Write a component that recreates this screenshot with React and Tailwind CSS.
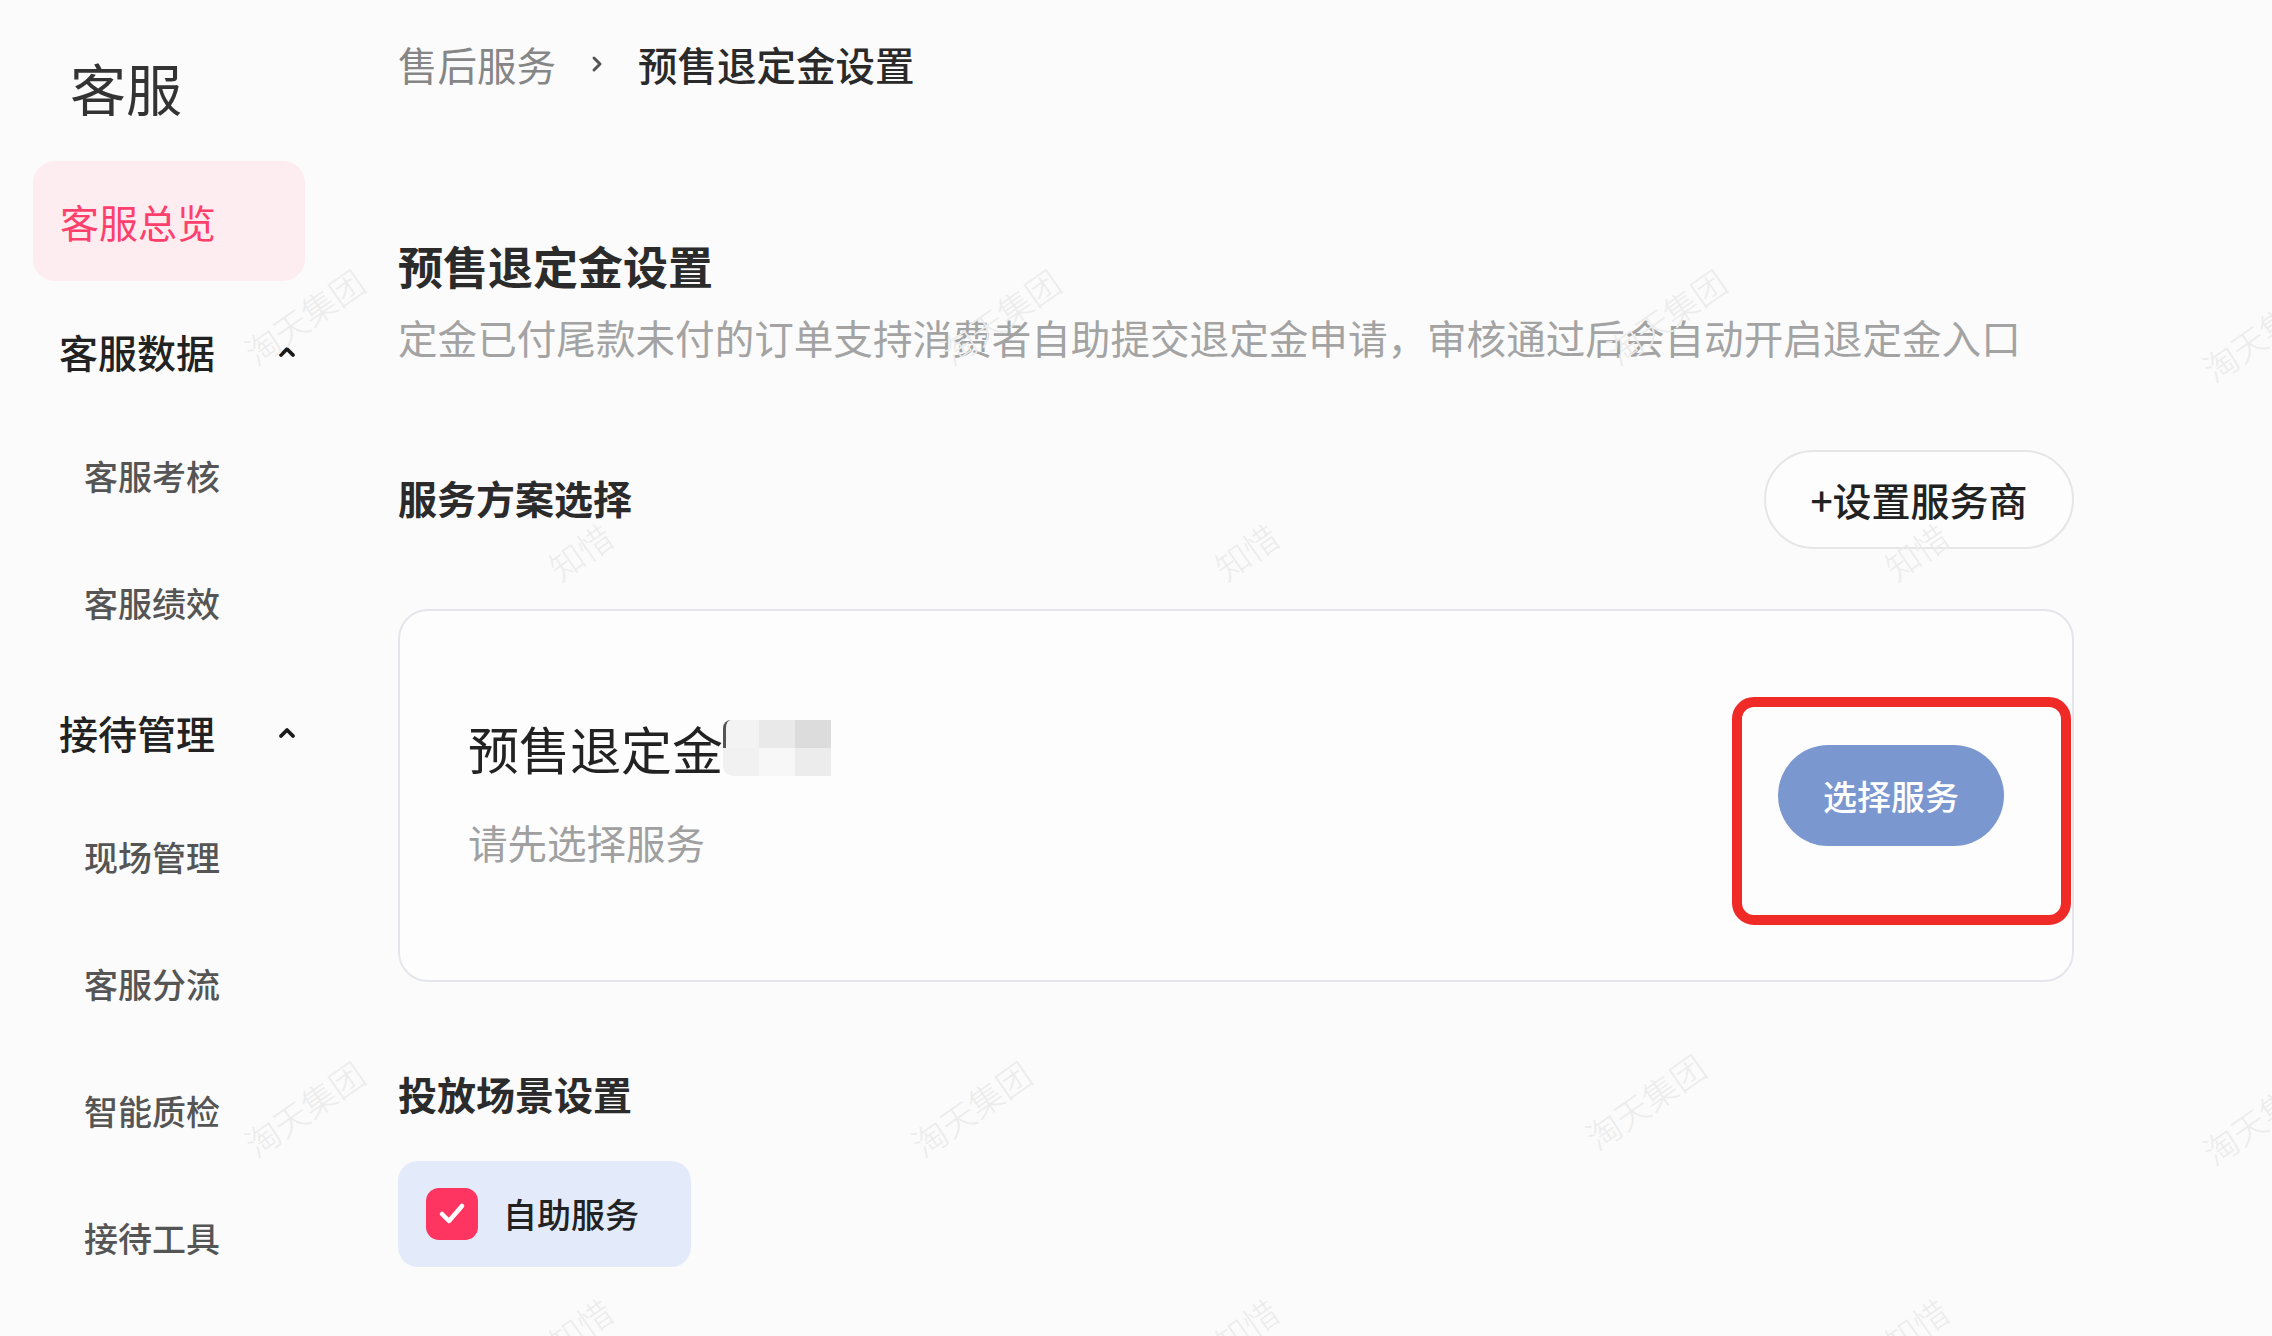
import React from 'react';

const font = { fontFamily: '"Noto Sans CJK SC", "Noto Sans", sans-serif' };

const marks = [
  { t: '淘天集团', x: 304, y: 316 },
  { t: '淘天集团', x: 1000, y: 316 },
  { t: '淘天集团', x: 1666, y: 316 },
  { t: '淘天集团', x: 2262, y: 333 },
  { t: '淘天集团', x: 304, y: 1108 },
  { t: '淘天集团', x: 971, y: 1108 },
  { t: '淘天集团', x: 1645, y: 1101 },
  { t: '淘天集团', x: 2262, y: 1116 },
  { t: '知惜', x: 580, y: 551 },
  { t: '知惜', x: 1246, y: 551 },
  { t: '知惜', x: 1916, y: 551 },
  { t: '知惜', x: 580, y: 1326 },
  { t: '知惜', x: 1246, y: 1326 },
  { t: '知惜', x: 1916, y: 1326 },
];

const ChevronUp = () => (
  <svg width="22" height="14" viewBox="0 0 22 14" fill="none">
    <path d="M5 11 L11 5 L17 11" stroke="#1a1a1a" strokeWidth="3.8" strokeLinecap="round" strokeLinejoin="round" />
  </svg>
);

const GroupHeader = ({ label }) => (
  <div className="flex h-[127px] items-center justify-between pl-[26px] pr-[100px]">
    <span className="text-[39px] font-medium leading-[52px] text-[#222]">{label}</span>
    <ChevronUp />
  </div>
);

const SubItem = ({ label }) => (
  <div className="flex h-[127px] items-center pb-[4px] pl-[51px]">
    <span className="text-[34px] font-medium leading-[48px] text-[#555]">{label}</span>
  </div>
);

export default function App() {
  return (
    <div className="relative min-h-screen w-full overflow-hidden bg-[#fbfbfb]" style={font}>
      <div className="flex">
        {/* sidebar */}
        <aside className="w-[398px] shrink-0 pl-[33px] pt-[55px]">
          <div className="pl-[37px] text-[56px] leading-[64px] text-[#333]">客服</div>
          <div className="mt-[42px] flex h-[120px] w-[272px] items-center rounded-[22px] bg-[#fdecf0] pl-[27px]">
            <span className="text-[39px] leading-[52px] text-[#ff3f6c]">客服总览</span>
          </div>
          <div className="mt-[6px]">
            <GroupHeader label="客服数据" />
            <SubItem label="客服考核" />
            <SubItem label="客服绩效" />
            <GroupHeader label="接待管理" />
            <SubItem label="现场管理" />
            <SubItem label="客服分流" />
            <SubItem label="智能质检" />
            <SubItem label="接待工具" />
          </div>
        </aside>

        {/* main */}
        <main className="flex-1 pr-[198px] pt-[38px]">
          <div className="flex items-center text-[39.5px] leading-[52px]">
            <span className="text-[#868686]">售后服务</span>
            <svg className="mx-[33px]" width="16" height="20" viewBox="0 0 16 20" fill="none">
              <path d="M5 4 L11 10 L5 16" stroke="#555" strokeWidth="3" strokeLinecap="round" strokeLinejoin="round" />
            </svg>
            <span className="font-medium text-[#2a2a2a]">预售退定金设置</span>
          </div>

          <h1 className="mt-[148px] text-[45px] font-bold leading-[56px] text-[#2b2b2b]">预售退定金设置</h1>
          <p className="mt-[17px] text-[39.6px] leading-[52px] text-[#a3a3a3]">
            定金已付尾款未付的订单支持消费者自助提交退定金申请，审核通过后会自动开启退定金入口
          </p>

          <div className="mt-[87px] flex items-center justify-between">
            <h2 className="-mt-[6px] text-[39px] font-bold leading-[52px] text-[#2b2b2b]">服务方案选择</h2>
            <button className="flex h-[99px] w-[310px] items-center justify-center rounded-full border-2 border-[#e6e6e8] bg-[#fdfdfd] text-[39px] font-medium text-[#222]">
              +设置服务商
            </button>
          </div>

          <div className="relative mt-[60px] flex h-[373px] items-center justify-between rounded-[30px] border-2 border-[#e4e6ec] bg-[#fdfdfd] px-[68px]">
            <div className="-mt-[6px]">
              <div className="flex items-center">
                <span className="text-[51px] leading-[60px] text-[#222]">预售退定金</span>
                <div className="grid h-[56px] w-[108px] grid-cols-3 grid-rows-2">
                  <div className="rounded-tl-[8px] border-l-[3px] border-[#555] bg-[#f3f3f3]" />
                  <div className="bg-[#e9e9e9]" />
                  <div className="bg-[#dcdcdc]" />
                  <div className="rounded-bl-[10px] bg-[#f1f1f1]" />
                  <div className="bg-[#f7f7f7]" />
                  <div className="bg-[#ececec]" />
                </div>
              </div>
              <div className="mt-[38px] text-[39.5px] leading-[52px] text-[#a0a0a0]">请先选择服务</div>
            </div>
            <button className="flex h-[101px] w-[226px] items-center justify-center rounded-full bg-[#7b97cf] text-[34px] font-medium text-white">
              选择服务
            </button>
            <div className="pointer-events-none absolute right-[1px] top-[86px] h-[228px] w-[339px] rounded-[22px] border-[10px] border-[#ef2a27]" />
          </div>

          <h2 className="mt-[85px] text-[39px] font-bold leading-[52px] text-[#2b2b2b]">投放场景设置</h2>
          <div className="mt-[42px] flex h-[106px] w-[293px] items-center rounded-[20px] bg-[#e3ebfb] pl-[28px]">
            <div className="flex h-[52px] w-[52px] items-center justify-center rounded-[13px] bg-[#ff3561]">
              <svg width="30" height="26" viewBox="0 0 30 26" fill="none">
                <path d="M5 13 L12 20 L25 5" stroke="white" strokeWidth="4.5" strokeLinecap="round" strokeLinejoin="round" />
              </svg>
            </div>
            <span className="ml-[25px] text-[34px] font-medium leading-[48px] text-[#222]">自助服务</span>
          </div>
        </main>
      </div>

      {/* watermark */}
      <div className="pointer-events-none absolute inset-0">
        {marks.map((m, i) => (
          <span
            key={i}
            className="absolute -translate-x-1/2 -translate-y-1/2 -rotate-[35deg] whitespace-nowrap text-[34px] font-light text-[#ececec]"
            style={{ left: m.x, top: m.y }}
          >
            {m.t}
          </span>
        ))}
      </div>
    </div>
  );
}
